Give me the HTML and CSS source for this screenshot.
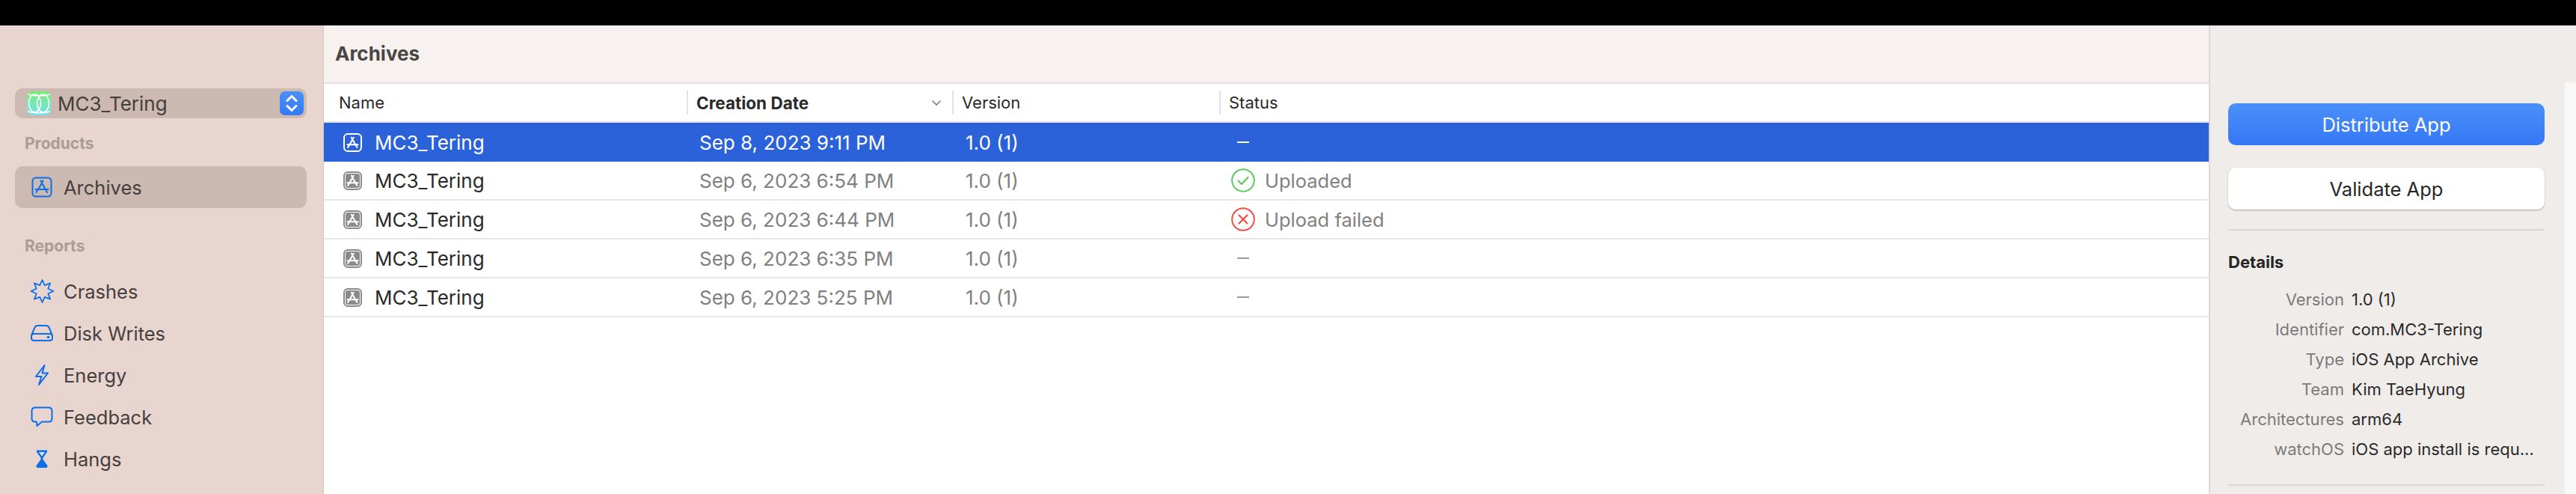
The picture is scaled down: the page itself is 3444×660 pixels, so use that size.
FILE: index.html
```html
<!DOCTYPE html>
<html lang="en">
<head>
    <meta charset="UTF-8">
    <title>Archives</title>
    <link rel="stylesheet" href="styles.css">
</head>
<body>

    <svg class="defs" width="0" height="0">
        <symbol id="appstore" viewBox="0 0 24 24">
            <path d="M13.5 3.500 L6.500 16 M10 3.500 L17.500 17 M3 15.500 H21 M4 20 L5.500 17.500 M19.500 20 L18.500 18" fill="none" stroke="currentColor" stroke-width="2.600" stroke-linecap="round"/>
        </symbol>
    </svg>

    <div class="topbar"></div>

    <div class="app">
        <aside class="sidebar">
            <div class="picker">
                <svg class="picker-icon" viewBox="0 0 32 32">
                    <defs>
                        <linearGradient id="tile" x1="0" y1="0" x2="0" y2="1">
                            <stop offset="0" stop-color="#76ec74"/>
                            <stop offset="1" stop-color="#74e2ee"/>
                        </linearGradient>
                    </defs>
                    <rect width="32" height="32" rx="7" fill="url(#tile)"/>
                    <g fill="none" stroke="#fff" stroke-width="1.600">
                        <ellipse cx="10.500" cy="16" rx="8" ry="12"/>
                        <ellipse cx="21.500" cy="16" rx="8" ry="12"/>
                        <path d="M1 4 Q16 8 31 4 M1 27 Q16 31 31 27"/>
                    </g>
                </svg>
                <span class="picker-name">MC3_Tering</span>
                <span class="stepper">
                    <svg viewBox="0 0 32 32" width="32" height="32">
                        <path d="M10 12.500 L16 6.500 L22 12.500 M10 19.500 L16 25.500 L22 19.500" fill="none" stroke="#fff" stroke-width="3" stroke-linecap="round" stroke-linejoin="round"/>
                    </svg>
                </span>
            </div>

            <div class="side-title">Products</div>
            <div class="side-item selected">
                <span class="side-icon">
                    <svg width="28" height="28" viewBox="0 0 28 28">
                        <rect x="1.500" y="1.500" width="25" height="25" rx="4.500" fill="none" stroke="#0b6fe9" stroke-width="2"/>
                        <path d="M15.500 5.500 L9.500 16.500 M12.500 5.500 L19 17.500 M5.500 17 H22.500 M6.500 21 L8 18.500 M21 21 L20 19" fill="none" stroke="#0b6fe9" stroke-width="2" stroke-linecap="round"/>
                    </svg>
                </span>
                Archives
            </div>

            <div class="side-title reports">Reports</div>
            <div class="side-item">
                <span class="side-icon">
                    <svg width="33" height="32" viewBox="0 0 33 32">
                        <path d="M16.500 1 L19.750 8.150 L27.100 5.400 L24.350 12.750 L31.500 16 L24.350 19.250 L27.100 26.600 L19.750 23.850 L16.500 31 L13.250 23.850 L5.900 26.600 L8.650 19.250 L1.500 16 L8.650 12.750 L5.900 5.400 L13.250 8.150 Z" fill="none" stroke="#0b6fe9" stroke-width="1.800" stroke-linejoin="round"/>
                    </svg>
                </span>
                Crashes
            </div>
            <div class="side-item">
                <span class="side-icon">
                    <svg width="32" height="24" viewBox="0 0 32 24">
                        <path d="M2 15 L6.500 4.500 Q7.600 2 10.500 2 H21.500 Q24.400 2 25.500 4.500 L30 15 M5.500 13 H26.500 Q30 13 30 16.500 V18.500 Q30 22 26.500 22 H5.500 Q2 22 2 18.500 V16.500 Q2 13 5.500 13 Z" fill="none" stroke="#0b6fe9" stroke-width="2"/>
                        <circle cx="24.500" cy="17.500" r="1.800" fill="#0b6fe9"/>
                    </svg>
                </span>
                Disk Writes
            </div>
            <div class="side-item">
                <span class="side-icon">
                    <svg width="20" height="30" viewBox="0 0 20 30">
                        <path d="M13.500 2 L2 17 H9.500 L6 28 L18 12.500 H10.500 Z" fill="none" stroke="#0b6fe9" stroke-width="2" stroke-linejoin="round"/>
                    </svg>
                </span>
                Energy
            </div>
            <div class="side-item">
                <span class="side-icon">
                    <svg width="30" height="28" viewBox="0 0 30 28">
                        <path d="M6 1.500 H24 Q28.500 1.500 28.500 6 V16 Q28.500 20.500 24 20.500 H15 L8.500 26 L8 20.500 H6 Q1.500 20.500 1.500 16 V6 Q1.500 1.500 6 1.500 Z" fill="none" stroke="#0b6fe9" stroke-width="2" stroke-linejoin="round"/>
                    </svg>
                </span>
                Feedback
            </div>
            <div class="side-item">
                <span class="side-icon">
                    <svg width="16" height="24" viewBox="0 0 16 24">
                        <path d="M1 0.500 H15 V3 L9.500 10.500 V13 L15.500 21 V22 Q15.500 24 13.500 24 H2.500 Q0.500 24 0.500 22 V21 L6.500 13 V10.500 L1 3 Z" fill="#0b6fe9"/>
                        <path d="M3.800 3 H12.200 L8 8.500 Z" fill="#d6dff0"/>
                    </svg>
                </span>
                Hangs
            </div>
        </aside>

        <main class="main">
            <div class="main-header">Archives</div>

            <div class="row table-head">
                <div class="head-cell">Name</div>
                <div class="head-cell sorted">
                    Creation Date
                    <svg class="sort-arrow" width="14" height="9" viewBox="0 0 14 9">
                        <path d="M1.500 1.500 L7 7 L12.500 1.500" fill="none" stroke="#7c7c7c" stroke-width="1.600"/>
                    </svg>
                </div>
                <div class="head-cell">Version</div>
                <div class="head-cell">Status</div>
            </div>

            <div class="row item active">
                <div class="cell-name">
                    <svg class="archive-icon" viewBox="0 0 24 24"><use href="#appstore"/></svg>
                    MC3_Tering
                </div>
                <div class="cell-date">Sep 8, 2023 9:11 PM</div>
                <div class="cell-version">1.0 (1)</div>
                <div class="cell-status"><span class="dash"></span></div>
            </div>
            <div class="row item">
                <div class="cell-name">
                    <svg class="archive-icon" viewBox="0 0 24 24"><use href="#appstore"/></svg>
                    MC3_Tering
                </div>
                <div class="cell-date">Sep 6, 2023 6:54 PM</div>
                <div class="cell-version">1.0 (1)</div>
                <div class="cell-status">
                    <svg class="status-icon" viewBox="0 0 32 32">
                        <circle cx="16" cy="16" r="14.800" fill="none" stroke="#5ccb5f" stroke-width="2"/>
                        <path d="M9.500 16.500 L14 21 L22.500 12" fill="none" stroke="#5ccb5f" stroke-width="2.200" stroke-linecap="round" stroke-linejoin="round"/>
                    </svg>
                    Uploaded
                </div>
            </div>
            <div class="row item">
                <div class="cell-name">
                    <svg class="archive-icon" viewBox="0 0 24 24"><use href="#appstore"/></svg>
                    MC3_Tering
                </div>
                <div class="cell-date">Sep 6, 2023 6:44 PM</div>
                <div class="cell-version">1.0 (1)</div>
                <div class="cell-status">
                    <svg class="status-icon" viewBox="0 0 32 32">
                        <circle cx="16" cy="16" r="14.800" fill="none" stroke="#ee5043" stroke-width="2"/>
                        <path d="M10.500 10.500 L21.500 21.500 M21.500 10.500 L10.500 21.500" fill="none" stroke="#ee5043" stroke-width="2.200" stroke-linecap="round"/>
                    </svg>
                    Upload failed
                </div>
            </div>
            <div class="row item">
                <div class="cell-name">
                    <svg class="archive-icon" viewBox="0 0 24 24"><use href="#appstore"/></svg>
                    MC3_Tering
                </div>
                <div class="cell-date">Sep 6, 2023 6:35 PM</div>
                <div class="cell-version">1.0 (1)</div>
                <div class="cell-status"><span class="dash"></span></div>
            </div>
            <div class="row item">
                <div class="cell-name">
                    <svg class="archive-icon" viewBox="0 0 24 24"><use href="#appstore"/></svg>
                    MC3_Tering
                </div>
                <div class="cell-date">Sep 6, 2023 5:25 PM</div>
                <div class="cell-version">1.0 (1)</div>
                <div class="cell-status"><span class="dash"></span></div>
            </div>
        </main>

        <section class="panel">
            <div class="panel-body">
                <button class="btn primary">Distribute App</button>
                <button class="btn">Validate App</button>
                <hr class="rule">
                <h3 class="details-title">Details</h3>
                <div class="details">
                    <div class="key">Version</div><div class="val">1.0 (1)</div>
                    <div class="key">Identifier</div><div class="val">com.MC3-Tering</div>
                    <div class="key">Type</div><div class="val">iOS App Archive</div>
                    <div class="key">Team</div><div class="val">Kim TaeHyung</div>
                    <div class="key">Architectures</div><div class="val">arm64</div>
                    <div class="key">watchOS</div><div class="val">iOS app install is requ...</div>
                </div>
                <hr class="rule">
            </div>
            <div class="scroll-strip"></div>
        </section>
    </div>

</body>
</html>
```

FILE: styles.css
```css
html, body {
    margin: 0;
    height: 660px;
    overflow: hidden;
}
body {
    font-family: Inter, "Liberation Sans", sans-serif;
    font-size: 26px;
    background-color: #fff;
    color: #2a2a2a;
}
.defs {
    position: absolute;
}
.topbar {
    height: 34px;
    background-color: #000;
}
.app {
    display: flex;
    height: 626px;
}

/* sidebar */
.sidebar {
    width: 433px;
    flex: none;
    box-sizing: border-box;
    padding: 84px 22px 0 20px;
    background-color: #e8d5cf;
    border-right: 1px solid #d5c7c2;
    color: #45403e;
}
.picker {
    display: flex;
    align-items: center;
    height: 40px;
    padding: 0 4px 0 16px;
    border-radius: 10px;
    background-color: #ccb9b2;
}
.picker-icon {
    width: 32px;
    height: 32px;
    flex: none;
}
.picker-name {
    margin-left: 9px;
    font-size: 26px;
}
.stepper {
    width: 32px;
    height: 32px;
    margin-left: auto;
    border-radius: 7px;
    background: linear-gradient(#4a91f8, #3478f6);
}
.side-title {
    height: 64px;
    padding: 0 0 0 13px;
    line-height: 68px;
    font-size: 21px;
    font-weight: 700;
    color: #ab9b96;
}
.side-title.reports {
    margin-top: 20px;
    height: 63px;
    line-height: 62px;
}
.side-item {
    display: flex;
    align-items: center;
    height: 56px;
    font-size: 25.500px;
}
.side-item.selected {
    border-radius: 10px;
    background-color: #ccb9b2;
}
.side-icon {
    display: flex;
    align-items: center;
    justify-content: center;
    width: 36px;
    margin: 0 11px 0 18px;
}

/* archive list */
.main {
    flex: 1;
    min-width: 0;
    background-color: #fff;
}
.main-header {
    height: 78px;
    box-sizing: border-box;
    padding-left: 15px;
    line-height: 76px;
    border-bottom: 2px solid #e3e0df;
    background-color: #f7f1f0;
    font-size: 26px;
    font-weight: 700;
    color: #4a4645;
}
.row {
    display: grid;
    grid-template-columns: 487px 355px 357px 1fr;
    align-items: center;
    box-sizing: border-box;
    height: 52px;
}
.table-head {
    border-bottom: 2px solid #e3e3e3;
    font-size: 22px;
}
.head-cell {
    display: flex;
    align-items: center;
    justify-content: space-between;
    height: 32px;
    box-sizing: border-box;
    padding: 0 14px 0 11px;
    border-right: 2px solid #e3e3e3;
}
.head-cell:first-child {
    padding-left: 20px;
}
.head-cell:last-child {
    border-right: none;
    justify-content: flex-start;
}
.head-cell.sorted {
    font-size: 22.500px;
    font-weight: 700;
}
.item {
    border-bottom: 2px solid #e6e6e6;
}
.cell-name {
    display: flex;
    align-items: center;
    padding-left: 26px;
    font-size: 26px;
}
.cell-date {
    padding-left: 15px;
    color: #808080;
}
.cell-version {
    padding-left: 16px;
    color: #808080;
}
.cell-status {
    display: flex;
    align-items: center;
    padding-left: 14px;
    font-size: 25.500px;
    color: #808080;
}
.archive-icon {
    width: 25px;
    height: 25px;
    margin-right: 17px;
    flex: none;
    box-sizing: border-box;
    padding: 1px;
    border: 2px solid #8a8a8a;
    border-radius: 6px;
    background-color: #8a8a8a;
    background-clip: content-box;
    color: #fff;
}
.status-icon {
    width: 32px;
    height: 32px;
    margin-right: 13px;
    flex: none;
}
.dash {
    display: block;
    width: 16px;
    height: 2px;
    margin-left: 8px;
    background-color: #9a9a9a;
}
.item.active {
    border-bottom: none;
    background-color: #2b62d9;
    color: #fff;
}
.item.active .cell-date,
.item.active .cell-version,
.item.active .cell-status {
    color: #fff;
}
.item.active .dash {
    background-color: #fff;
}
.item.active .archive-icon {
    border-color: #fff;
    background-color: #2b62d9;
}

/* right panel */
.panel {
    display: flex;
    width: 491px;
    flex: none;
    box-sizing: border-box;
    border-left: 2px solid #dcd8d6;
    background-color: #f0ecea;
}
.panel-body {
    width: 473px;
    box-sizing: border-box;
    padding: 104px 26px 0 24px;
}
.scroll-strip {
    flex: 1;
    margin-top: 76px;
    background-color: #f8f8f8;
    border-left: 1px solid #ececec;
}
.btn {
    display: block;
    width: 100%;
    height: 56px;
    margin: 0 0 26px;
    border: none;
    border-radius: 10px;
    background-color: #fff;
    box-shadow: 0 1px 2px rgba(0, 0, 0, 0.3);
    font-family: inherit;
    font-size: 25.500px;
    color: #262626;
}
.btn.primary {
    margin-bottom: 30px;
    background: linear-gradient(#4a90f8, #3677f6);
    box-shadow: none;
    color: #fff;
}
.rule {
    height: 2px;
    margin: 0;
    border: none;
    background-color: #dcd7d4;
}
.details-title {
    margin: 29px 0 17px;
    font-size: 22px;
    line-height: 26px;
    font-weight: 700;
    color: #262626;
}
.details {
    display: grid;
    grid-template-columns: 155px 1fr;
    column-gap: 10px;
    grid-auto-rows: 40px;
    align-items: center;
    margin-bottom: 27px;
    font-size: 22px;
}
.key {
    text-align: right;
    color: #7d7a79;
}
.val {
    white-space: nowrap;
    color: #2a2a2a;
}
```
